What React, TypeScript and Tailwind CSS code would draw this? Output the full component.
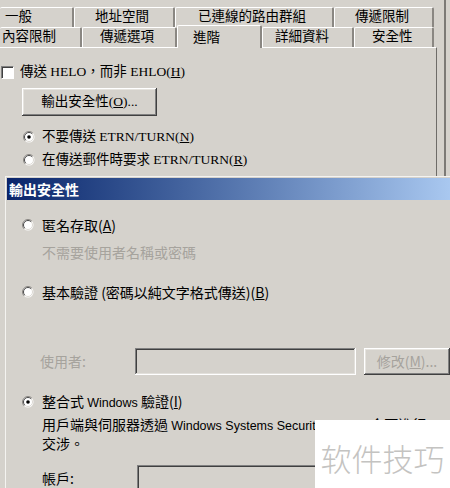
import React from 'react';

type TabProps = { label: string; cls: string; selected?: boolean };

// classic 3D bevels
const RAISED =
  'shadow-[inset_-1px_-1px_#404040,inset_1px_1px_#ffffff,inset_-2px_-2px_#808080,inset_2px_2px_#e6e4df]';
const SUNKEN =
  'shadow-[inset_-1px_-1px_#ffffff,inset_1px_1px_#808080,inset_-2px_-2px_#e2e0db,inset_2px_2px_#404040]';

const Tab: React.FC<TabProps> = ({ label, cls, selected }) => (
  <div
    className={`${cls} shrink-0 flex border-t border-t-white border-r-2 border-r-[#8a8782] rounded-t-[2px] bg-[#d5d2cc] whitespace-nowrap ${
      selected ? 'relative z-10 -mt-[2px] h-[23px] items-start pt-[2px]' : 'h-full items-center'
    }`}
  >
    {label}
  </div>
);

const Radio: React.FC<{ checked?: boolean }> = ({ checked }) => (
  <svg width="12" height="12" viewBox="0 0 12 12" className="shrink-0">
    <circle cx="6" cy="6" r="5.5" fill="#ffffff" />
    <path d="M2.1 9.9A5.5 5.5 0 0 1 9.9 2.1" fill="none" stroke="#8a8782" />
    <path d="M2.8 9.2A4.5 4.5 0 0 1 9.2 2.8" fill="none" stroke="#4a4a4a" />
    <path d="M2.8 9.2A4.5 4.5 0 0 0 9.2 2.8" fill="none" stroke="#dcd9d3" />
    {checked && <circle cx="6" cy="6" r="1.8" fill="#000000" />}
  </svg>
);

const Checkbox = () => (
  <div className="ml-px w-[13px] h-[13px] shrink-0 bg-white border-t border-l border-[#808080] border-b border-r border-b-white border-r-white">
    <div className="w-full h-full border-t border-l border-[#404040]" />
  </div>
);

const Latin: React.FC<{ children: React.ReactNode }> = ({ children }) => (
  <span className="text-[12.5px] [font-family:'Liberation_Sans',Arial,sans-serif]">{children}</span>
);

export default function App() {
  return (
    <div className="relative w-[450px] h-[488px] overflow-hidden bg-[#d5d2cc] text-black">
      {/* property sheet: 進階 page */}
      <div className="h-[176px] flex text-[13.5px] [font-family:'Liberation_Serif','Noto_Sans_CJK_TC',serif]">
        <div className="w-[437px] flex flex-col">
          <div className="h-[7px] shrink-0" />
          <div className="h-[20px] flex shrink-0">
            <Tab label="一般" cls="w-[74px] pl-[5px]" />
            <Tab label="地址空間" cls="w-[101px] pl-[20px] border-l border-l-white" />
            <Tab label="已連線的路由群組" cls="w-[159px] pl-[22px] border-l border-l-white" />
            <Tab label="傳遞限制" cls="w-[100px] pl-[20px] border-l border-l-white" />
          </div>
          <div className="h-[20px] flex shrink-0">
            <Tab label="內容限制" cls="w-[82px] pl-[2px]" />
            <Tab label="傳遞選項" cls="w-[95px] pl-[17px] border-l border-l-white" />
            <Tab label="進階" cls="w-[85px] pl-[15px] border-l border-l-white" selected />
            <Tab label="詳細資料" cls="w-[92px] pl-[12px] border-l border-l-white" />
            <Tab label="安全性" cls="w-[80px] pl-[17px] border-l border-l-white" />
          </div>
          <div className="flex-1 flex flex-col border-t border-t-white border-r border-r-[#6e6c68]">
            <div className="mt-[17px] h-[15px] flex items-center gap-[6px]">
              <Checkbox />
              <span>
                傳送 HELO，而非 EHLO(<u>H</u>)
              </span>
            </div>
            <button
              className={`mt-[8px] ml-[22px] w-[135px] h-[28px] flex items-center justify-center bg-[#d5d2cc] ${RAISED}`}
            >
              輸出安全性(<u>O</u>)...
            </button>
            <div className="mt-[13px] ml-[23px] h-[16px] flex items-center gap-[7px]">
              <Radio checked />
              <span>
                不要傳送 ETRN/TURN(<u>N</u>)
              </span>
            </div>
            <div className="mt-[7px] ml-[23px] h-[16px] flex items-center gap-[7px]">
              <Radio />
              <span>
                在傳送郵件時要求 ETRN/TURN(<u>R</u>)
              </span>
            </div>
          </div>
        </div>
        <div className="ml-[7px] w-[2px] bg-[#7c7a76]" />
      </div>

      {/* 輸出安全性 dialog */}
      <div className="ml-[5px] border-t border-l border-[#f4f3f0] pl-px pt-px text-[14px] [font-family:'Noto_Sans_CJK_TC',sans-serif]">
        <div className="h-[22px] flex items-center pl-[2px] bg-gradient-to-r from-[#0a246a] to-[#a9c8f0] text-white font-bold text-[14px]">
          輸出安全性
        </div>

        <div className="pl-[15px] flex flex-col">
          <div className="mt-[16px] h-[18px] flex items-center gap-[8px]">
            <Radio />
            <span>
              匿名存取(<u>A</u>)
            </span>
          </div>
          <div className="mt-[9px] ml-[20px] h-[18px] flex items-center text-[#a6a39d]">不需要使用者名稱或密碼</div>

          <div className="mt-[22px] h-[18px] flex items-center gap-[8px]">
            <Radio />
            <span>
              基本驗證 (密碼以純文字格式傳送)(<u>B</u>)
            </span>
          </div>
          <div className="mt-[47px] ml-[18px] h-[27px] flex items-center">
            <span className="w-[97px] text-[#a6a39d]">使用者:</span>
            <div className={`w-[225px] h-full bg-[#d5d2cc] ${SUNKEN}`} />
            <div
              className={`ml-[8px] w-[86px] h-full shrink-0 flex items-center justify-center text-[#a6a39d] ${RAISED}`}
            >
              修改(<u>M</u>)...
            </div>
          </div>

          <div className="mt-[18px] h-[18px] flex items-center gap-[8px]">
            <Radio checked />
            <span>
              整合式 <Latin>Windows</Latin> 驗證(<u>I</u>)
            </span>
          </div>
          <p className="mt-[5px] ml-[20px] leading-[17px] whitespace-nowrap">
            用戶端與伺服器透過 <Latin>Windows Systems Security Service</Latin> 介面進行
            <br />
            交涉。
          </p>
          <div className="mt-[13px] ml-[20px] h-[27px] flex items-center">
            <span className="w-[95px]">帳戶:</span>
            <div className={`w-[225px] h-full bg-[#d5d2cc] ${SUNKEN}`} />
          </div>
        </div>
      </div>

      {/* corner watermark */}
      <div className="absolute right-0 bottom-0 w-[135px] h-[68px] bg-white flex items-start justify-center pt-[18px]">
        <span className="text-[31px] leading-[40px] font-light text-[#c4c3c1] [font-family:'Noto_Sans_CJK_SC',sans-serif]">
          软件技巧
        </span>
      </div>
    </div>
  );
}
